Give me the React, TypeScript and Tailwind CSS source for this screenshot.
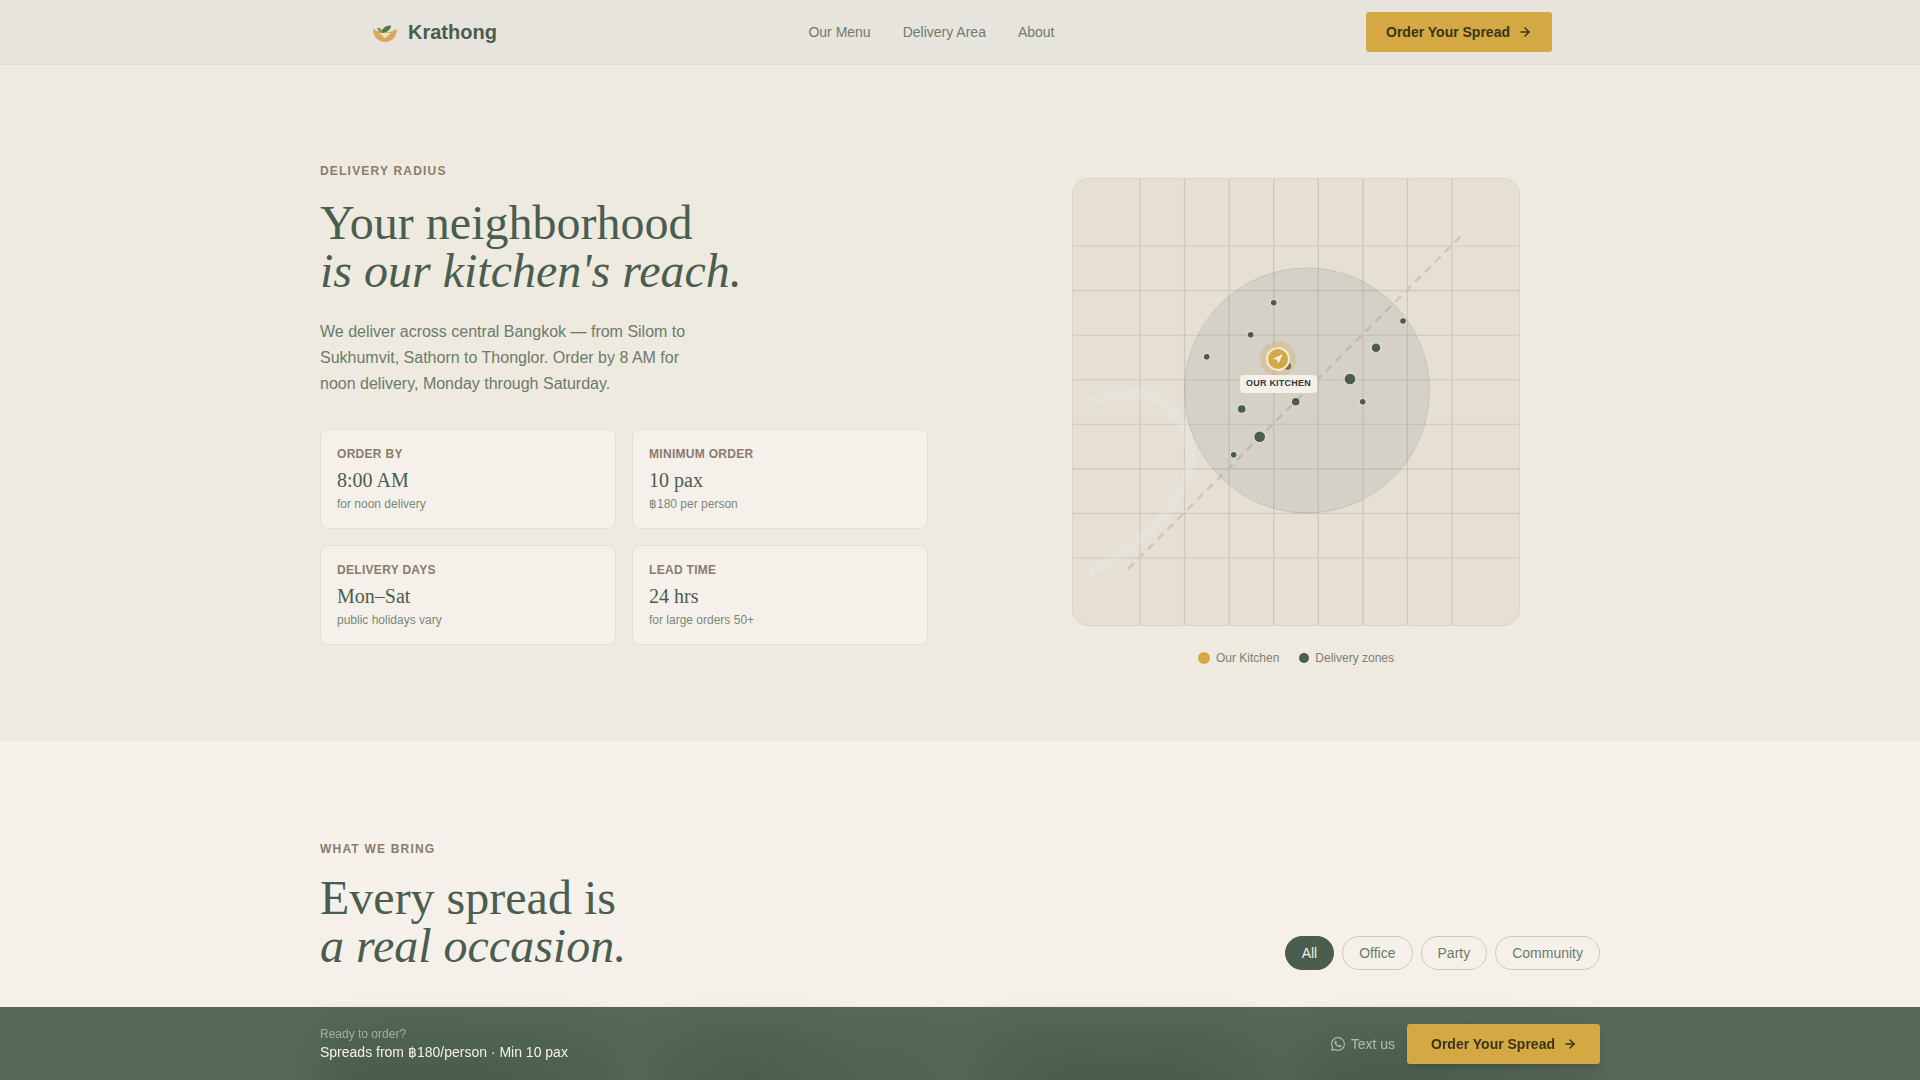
import { ArrowRight, Navigation } from "lucide-react";
import { BsWhatsapp } from "react-icons/bs";

const FACTS = [
  { label: "Order by", value: "8:00 AM", note: "for noon delivery" },
  { label: "Minimum order", value: "10 pax", note: "฿180 per person" },
  { label: "Delivery days", value: "Mon–Sat", note: "public holidays vary" },
  { label: "Lead time", value: "24 hrs", note: "for large orders 50+" },
];

const GRID_LINES = [68, 112.6, 157.2, 201.7, 246.3, 290.9, 335.4, 380];

const ZONES = [
  { x: 201.7, y: 124.7, r: 2.5 },
  { x: 178.7, y: 156.7, r: 2.5 },
  { x: 134.7, y: 178.7, r: 2.5 },
  { x: 331, y: 143, r: 2.5 },
  { x: 304, y: 169.7, r: 4 },
  { x: 278, y: 201, r: 5 },
  { x: 290.7, y: 223.7, r: 2.5 },
  { x: 223.7, y: 223.7, r: 3.5 },
  { x: 169.7, y: 231, r: 3.5 },
  { x: 215.3, y: 188, r: 3.5 },
  { x: 187.7, y: 258.7, r: 5 },
  { x: 161.7, y: 276.7, r: 2.5 },
];

const FILTERS = ["All", "Office", "Party", "Community"];

function Logo() {
  return (
    <svg viewBox="0 0 32 32" className="h-8 w-8" aria-hidden="true">
      <path d="M5 13Q17 20 29 13C29 20 24 26 17 26C10 26 5 20 5 13z" fill="#D9A85A" />
      <path d="M11 17H23L17 22z" fill="#F1E3C2" />
      <path d="M17 6c1 1.500 1 3 .5 4.500-1.500-1.500-1.500-3-.5-4.500z" fill="#EDE8D2" />
      <path d="M13 17C14 12 18 9 23 9.500C23 13.500 19 17 13 17z" fill="#4F7A45" />
      <path d="M9 12C11.500 11 14 13 15 17C12 17 10 15 9 12z" fill="#7C9A5C" />
    </svg>
  );
}

function OrderButton({ className }: { className: string }) {
  return (
    <button className={`flex h-10 items-center gap-2 rounded-[3px] bg-[#D4A843] text-sm font-bold text-[#3A3418] ${className}`}>
      Order Your Spread
      <ArrowRight size={14} strokeWidth={2.5} />
    </button>
  );
}

function SectionHeading({ label, plain, italic, gap }: { label: string; plain: string; italic: string; gap: string }) {
  return (
    <>
      <p className="text-xs font-semibold uppercase tracking-widest text-[#8B7B6B]">{label}</p>
      <h2 className={`${gap} font-['Liberation_Serif',serif] text-5xl font-normal leading-[48px] text-[#4A5D4F]`}>
        {plain}
        <br />
        <em>{italic}</em>
      </h2>
    </>
  );
}

function DeliveryMap() {
  return (
    <div className="relative h-[448px] w-[448px] overflow-hidden rounded-2xl border border-[#DAD4C8] bg-[#E5DFD4]">
      <svg viewBox="0 0 448 448" className="absolute -left-px -top-px h-[448px] w-[448px]" aria-hidden="true">
        {GRID_LINES.map((p) => (
          <g key={p} stroke="#CDC8BC">
            <line x1={p} y1="0" x2={p} y2="448" strokeWidth="1.3" />
            <line x1="0" y1={p} x2="448" y2={p} strokeWidth="1.1" />
          </g>
        ))}
        <path
          d="M21 393C70 365 112 325 118 285C122 245 90 212 60 216C45 217 30 220 20 224"
          fill="none"
          stroke="#F5F1EA"
          strokeOpacity="0.25"
          strokeWidth="10"
          strokeLinecap="round"
        />
        <line x1="56" y1="391" x2="391" y2="56" stroke="#CDC8BC" strokeWidth="2.5" strokeDasharray="8 6" />
        <circle cx="235" cy="212.5" r="122.5" fill="#4A5D4F" fillOpacity="0.1" stroke="#4A5D4F" strokeOpacity="0.15" strokeWidth="1" />
        {ZONES.map((z) => (
          <circle key={`${z.x}-${z.y}`} cx={z.x} cy={z.y} r={z.r + 0.3} fill="#4A5D4F" stroke="#F5F1EA" strokeOpacity="0.3" strokeWidth="3" paintOrder="stroke" />
        ))}
      </svg>
      <div className="absolute left-[187px] top-[162px] flex h-9 w-9 items-center justify-center rounded-full bg-[#D4A843]/25">
        <span className="flex h-6 w-6 items-center justify-center rounded-full border-2 border-[#F5EBCF] bg-[#D4A843]">
          <Navigation size={10} className="fill-[#F5F1EA] text-[#F5F1EA]" />
        </span>
      </div>
      <span className="absolute left-[167px] top-[196px] flex h-[18px] w-[77px] items-center justify-center whitespace-nowrap rounded bg-[#F5F1EA] text-[9px] font-bold uppercase tracking-wide text-[#2F3A33]">
        Our Kitchen
      </span>
    </div>
  );
}

export default function App() {
  return (
    <div className="relative h-screen overflow-hidden bg-[#F5F1EA] font-['Liberation_Sans',sans-serif]">
      <nav className="h-[65px] border-b border-[#DEDBD0] bg-[#E6E4DC]">
        <div className="mx-auto flex h-16 w-[1184px] items-center justify-between">
          <div className="flex items-center gap-2">
            <Logo />
            <span className="text-xl font-bold text-[#4A5D4F]">Krathong</span>
          </div>
          <div className="flex items-center gap-8 text-sm text-[#6F7A6E]">
            <a>Our Menu</a>
            <a>Delivery Area</a>
            <a>About</a>
          </div>
          <OrderButton className="px-5" />
        </div>
      </nav>

      <section className="h-[676px] bg-[#EEEADF] pt-[98px]">
        <div className="mx-auto grid h-[484px] w-[1280px] grid-cols-2 items-start gap-16">
          <div>
            <SectionHeading label="Delivery radius" plain="Your neighborhood" italic="is our kitchen's reach." gap="mt-[20px]" />
            <p className="mt-6 max-w-[384px] text-base leading-[26px] text-[#6B7B6B]">
              We deliver across central Bangkok — from Silom to Sukhumvit, Sathorn to Thonglor. Order by 8 AM for noon delivery, Monday through Saturday.
            </p>
            <div className="mt-8 grid grid-cols-2 gap-4">
              {FACTS.map((f) => (
                <div key={f.label} className="rounded-lg border border-[#E5E0D5] bg-[#F5F1EA] p-4">
                  <p className="text-xs font-semibold uppercase tracking-wide text-[#8B7B6B]">{f.label}</p>
                  <p className="mt-1 font-['Liberation_Serif',serif] text-xl text-[#4A5D4F]">{f.value}</p>
                  <p className="mt-0.5 text-xs text-[#7B877B]">{f.note}</p>
                </div>
              ))}
            </div>
          </div>
          <div className="flex flex-col items-center pt-[15px]">
            <DeliveryMap />
            <div className="mt-6 flex items-center gap-5 text-xs text-[#7C7F72]">
              <span className="flex items-center gap-1.5">
                <span className="h-3 w-3 rounded-full bg-[#D4A843]" />
                Our Kitchen
              </span>
              <span className="flex items-center gap-1.5">
                <span className="h-2.5 w-2.5 rounded-full bg-[#4A5D4F]" />
                Delivery zones
              </span>
            </div>
          </div>
        </div>
      </section>

      <section className="pt-[100px]">
        <div className="mx-auto w-[1280px]">
          <div className="flex items-end justify-between">
            <div>
              <SectionHeading label="What we bring" plain="Every spread is" italic="a real occasion." gap="mt-[17px]" />
            </div>
            <div className="flex gap-2 text-sm">
              {FILTERS.map((f, i) => (
                <span
                  key={f}
                  className={
                    i === 0
                      ? "rounded-full border border-[#4A5D4F] bg-[#4A5D4F] px-4 py-1.5 text-[#F5F1EA]"
                      : "rounded-full border border-[#CFC9BC] px-4 py-1.5 text-[#6B7B6B]"
                  }
                >
                  {f}
                </span>
              ))}
            </div>
          </div>
          <div className="mt-[64px] grid grid-cols-4 gap-6 blur-lg">
            <div className="h-64 rounded-lg bg-[linear-gradient(90deg,#3d4a38_0%,#3d4a38_55%,#8b8f7a_100%)]" />
            <div className="h-64 rounded-lg bg-[linear-gradient(90deg,#9a9a85_0%,#3d4a38_35%,#a0a08c_70%)]" />
            <div className="h-64 rounded-lg bg-[linear-gradient(90deg,#8a8f78_0%,#3c4a2e_30%,#4c5a2e_70%,#8a8f78_100%)]" />
            <div className="h-64 rounded-lg bg-[linear-gradient(90deg,#5a6a3a_0%,#3c4a2e_40%,#a0a08c_100%)]" />
          </div>
        </div>
      </section>

      <div className="fixed inset-x-0 bottom-0 h-[73px] bg-[#4A5D4F]/92 backdrop-blur-xl">
        <div className="mx-auto flex h-full w-[1280px] items-center justify-between">
          <div>
            <p className="text-xs text-[#F5F1EA]/50">Ready to order?</p>
            <p className="text-sm text-[#F5F1EA]">Spreads from ฿180/person · Min 10 pax</p>
          </div>
          <div className="flex items-center gap-3">
            <span className="flex items-center gap-1.5 text-sm text-[#F5F1EA]/60">
              <BsWhatsapp size={14} />
              Text us
            </span>
            <OrderButton className="pl-6 pr-[23px] shadow-md" />
          </div>
        </div>
      </div>
    </div>
  );
}
